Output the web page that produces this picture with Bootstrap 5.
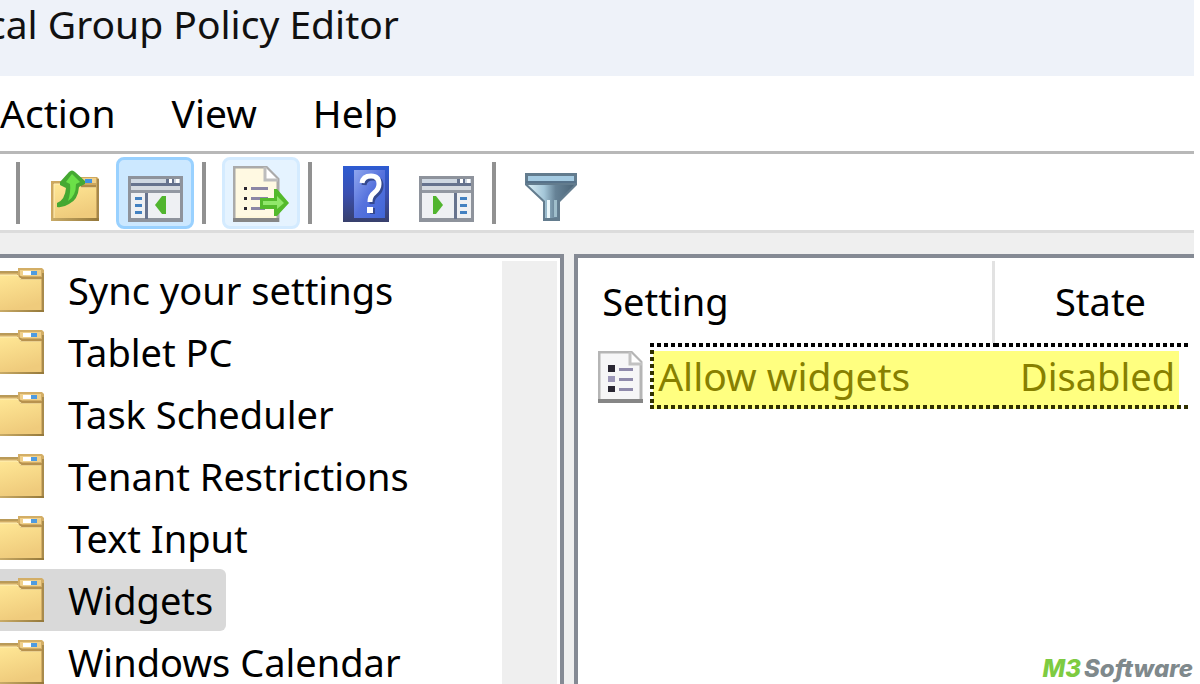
<!DOCTYPE html>
<html lang="en">
<head>
<meta charset="utf-8">
<meta name="viewport" content="width=device-width, initial-scale=1">
<title>Local Group Policy Editor</title>
<link href="https://cdn.jsdelivr.net/npm/bootstrap@5.3.0/dist/css/bootstrap.min.css" rel="stylesheet">
<style>
body{font-family:"Noto Sans","Open Sans",sans-serif;font-size:38px;line-height:60px;color:#000;background:#fff;overflow:hidden;padding-right:6px}
.title-bar{flex:none;background:#eef2f9;height:76px;font-size:39px;line-height:48px;color:#111}
.title-bar h1{font:inherit;margin:0 0 0 -13px;white-space:nowrap}
.menu-bar{flex:none;height:78px;padding:7px 0;border-bottom:3px solid #b8b8b8;gap:56px;font-size:39px}
.menu-bar a,.tree a{color:#000;text-decoration:none;white-space:nowrap}
.tools{flex:none;height:79px;border-bottom:3px solid #dcdcdc;padding:2px 0 0 16px}
.tool{border:3px solid transparent;border-radius:8px;background:none;padding:0;width:78px;height:72px;flex:none;display:flex;justify-content:center;align-items:flex-end;padding-bottom:4px}
.tool.slim{width:75px}
.tool.pressed{background:#cce8ff;border-color:#99d1ff}
.tool.hovered{background:#e5f3ff;border-color:#d4ebff}
.tool-group{gap:2px}
.tool-group.wide{gap:6px}
.rule-v{width:4px;height:62px;background:#919191;flex:none;margin:0 16px 0 8px}
.rule-v:first-child{margin-left:0}
.workspace{background:#efefef;padding-top:21px;gap:10px;min-height:0}
.pane{background:#fff;border:4px solid #858a94;border-bottom:0;min-width:0;overflow:hidden}
.tree-pane{width:calc(47% + 3px);border-left:0;flex:none}
.list-pane{border-right:0}
.tree{padding-top:1px}
.tree a{display:flex;align-items:center;height:62px;padding-right:13px;width:max-content;border-radius:0 6px 6px 0;gap:24px}
.tree a.active{background:#d9d9d9}
.scroll-track{width:55px;background:#efefef;margin:3px 3px 0 0}
.policy{table-layout:fixed;color:#000}
.policy > :not(caption) > * > *{padding:0;background-color:transparent;font-weight:400;box-shadow:none;vertical-align:middle;white-space:nowrap;line-height:60px}
.policy thead tr{height:85px}
.policy tbody tr{height:66px}
.policy > thead > tr > th.h-setting{padding:0 0 0 24px;background:linear-gradient(#e2e2e2,#e2e2e2) right 3px/3px 100% no-repeat}
.policy > thead > tr > th{background-position:right 3px}
.policy > thead > tr > th.h-state{padding:0 0 0 60px}
.policy > tbody > tr > td.glyph{padding:2px 0 0 20px}
.policy > tbody > tr > td.lit{color:#878000;padding:0 0 0 8px;font-size:39px;
 background:
 repeating-linear-gradient(90deg,#000 0 4px,transparent 4px 7px) 0 0/100% 4px no-repeat,
 repeating-linear-gradient(90deg,#303000 0 4px,transparent 4px 7px) 0 100%/100% 4px no-repeat,
 repeating-linear-gradient(#303000 0 4px,transparent 4px 7px) 0 0/4px 100% no-repeat,
 linear-gradient(#ffff80,#ffff80) 3px 8px/100% 100% no-repeat}
.policy > tbody > tr > td.lit-end{color:#878000;padding:0 0 0 25px;
 background:
 repeating-linear-gradient(90deg,#000 0 4px,transparent 4px 7px) 0 0/calc(100% - 3px) 4px no-repeat,
 repeating-linear-gradient(90deg,#303000 0 4px,transparent 4px 7px) 0 100%/calc(100% - 3px) 4px no-repeat,
 linear-gradient(#ffff80,#ffff80) 0 8px/calc(100% - 15px) 100% no-repeat}
.col-glyph{width:72px}
.col-name{width:56%}
.brand-mark{right:7px;bottom:0;gap:3px;font-family:Inter,sans-serif;font-weight:800;font-style:italic;font-size:24px;line-height:30px;color:#7f898c;white-space:nowrap}
.brand-mark b{font-weight:800;color:#7ecb41}
</style>
</head>
<body class="vh-100 d-flex flex-column position-relative">
<svg width="0" height="0" class="position-absolute" aria-hidden="true">
<defs>
<linearGradient id="gold" x1="0" y1="0" x2="0.3" y2="1"><stop offset="0" stop-color="#ffe795"/><stop offset="1" stop-color="#efcb7c"/></linearGradient>
<linearGradient id="edge" x1="0" y1="0" x2="1" y2="0"><stop offset="0" stop-color="#c9ab67"/><stop offset="1" stop-color="#94783a"/></linearGradient>
<linearGradient id="blue" x1="0" y1="0" x2="0" y2="1"><stop offset="0" stop-color="#2d5bd2"/><stop offset=".5" stop-color="#3a4fb0"/><stop offset="1" stop-color="#38406c"/></linearGradient>
<linearGradient id="page" x1="0" y1="0" x2="1" y2="1"><stop offset="0" stop-color="#8fa6ee"/><stop offset=".5" stop-color="#5672dd"/><stop offset="1" stop-color="#3f66d8"/></linearGradient>
<linearGradient id="steel" x1="0" y1="0" x2="1" y2="0"><stop offset="0" stop-color="#d9eef6"/><stop offset=".35" stop-color="#a4c6d8"/><stop offset=".6" stop-color="#668296"/><stop offset="1" stop-color="#4c6578"/></linearGradient>
<symbol id="folder" viewBox="0 0 44 46">
<path d="M0 5H18V1H42L44 3V45H0Z" fill="#d3ae66"/>
<path d="M0 4H18V6H0Z" fill="#b99a58"/>
<path d="M20 3H41V9H20Z" fill="#f0d08b"/>
<path d="M23 4H31V8H23Z" fill="#fff"/><path d="M31 4H37V8H31Z" fill="#4f9be0"/>
<path d="M0 8H18L21 13H41V43H0Z" fill="url(#gold)"/>
<path d="M0 8H17L21 12H41" fill="none" stroke="#fff0b8" stroke-width="1"/>
<path d="M19 9L22 11H42" fill="none" stroke="#b8924e" stroke-width="2"/>
<path d="M42 6H44V45H42Z" fill="#a98b4c"/><path d="M0 43H44V45H0Z" fill="url(#edge)"/>
</symbol>
<symbol id="winframe" viewBox="0 0 55 46">
<path d="M0 0H55V46H0Z" fill="#8e939c"/><path d="M3 3H52V42H3Z" fill="#eef0f3"/>
<path d="M3 3H52V7H3Z" fill="#cfd8e2"/><path d="M3 7H52V10H3Z" fill="#66738e"/>
<path d="M38 3H41V7H38ZM44 3H46V7H44Z" fill="#66738e"/><path d="M41 3H44V7H41ZM48 3H51V7H48Z" fill="#fff"/>
<path d="M3 10H52V15H3Z" fill="#d5dae0"/><path d="M3 14H52V17H3Z" fill="#9298a2"/>
</symbol>
</defs>
</svg>

<header class="title-bar overflow-hidden"><h1>cal Group Policy Editor</h1></header>

<nav class="menu-bar d-flex" aria-label="Menu"><a href="#">Action</a><a href="#">View</a><a href="#">Help</a></nav>

<div class="tools d-flex align-items-center" role="toolbar" aria-label="Tools">
<span class="rule-v"></span>
<div class="tool-group d-flex">
<button type="button" class="tool" aria-label="Up one level"><svg width="48" height="52" viewBox="0 0 48 52">
<path d="M0 11H28V7H46L48 9V51H0Z" fill="#cda85f"/><path d="M30 8H45V13H30Z" fill="#efd08b"/><path d="M34 9H41V13H34Z" fill="#3f93e4"/>
<path d="M3 14H28L31 18H45V48H3Z" fill="url(#gold)"/><path d="M3 48V14H27L31 17H45" fill="none" stroke="#fff0ba"/><path d="M30 16H45" stroke="#b08c49" stroke-width="2"/>
<path d="M46 9H48V51H46Z" fill="#a5874a"/><path d="M0 48H48V51H0Z" fill="url(#edge)"/>
<path d="M18 2Q21 -1 24 2L34 11V14L28 17Q27 30 18 34Q12 38 6 37V33Q14 30 15 18L9 15V12Z" fill="#45a832"/><path d="M21 4L29 12L25 14Q25 26 17 31Q20 22 19 14L15 12Z" fill="#6be048"/></svg></button>
<button type="button" class="tool pressed" aria-label="Show or hide tree" aria-pressed="true"><svg width="55" height="46" viewBox="0 0 55 46">
<use href="#winframe"/><path d="M17 17H20V43H17Z" fill="#66738e"/><path d="M7 21H14V24H7ZM7 28H14V31H7ZM7 35H14V38H7Z" fill="#4381c1"/><path d="M38 20V38H34L27 29L34 20Z" fill="#51b52f"/></svg></button>
</div>
<span class="rule-v"></span>
<button type="button" class="tool hovered" aria-label="Export list"><svg width="56" height="56" viewBox="0 0 56 56">
<path d="M1 1H33L45 13V55H1Z" fill="#fff7da" stroke="#aaa" stroke-width="3"/><path d="M3 3H31V15H43V50H3Z" fill="#fff9e2"/><path d="M32 1V14H45" fill="#fff" stroke="#bdbdbd" stroke-width="3"/><path d="M0 52H46V56H0Z" fill="#868686"/>
<path d="M11 21H14V24H11ZM11 31H14V34H11ZM11 41H14V44H11Z" fill="#2a2530"/><path d="M18 21H35V24H18ZM18 31H35V34H18ZM18 41H32V44H18Z" fill="#8b86a5"/>
<path d="M27 32H41V23H44L56 37L44 50H41V43H27Z" fill="#54ba2c"/><path d="M30 35H44V30L51 37L44 43V39H30Z" fill="#91e76b"/></svg></button>
<span class="rule-v"></span>
<div class="tool-group wide d-flex">
<button type="button" class="tool slim" aria-label="Help"><svg width="46" height="56" viewBox="0 0 46 56">
<path d="M0 0H46V56H0Z" fill="url(#blue)"/><path d="M11 4H42V52H11Z" fill="url(#page)"/>
<path d="M19 17Q20 10 28 10T36 18Q36 23 31 27Q27 30 27 36" fill="none" stroke="#34488f" stroke-width="5" transform="translate(2 2)"/>
<path d="M19 17Q20 10 28 10T36 18Q36 23 31 27Q27 30 27 36" fill="none" stroke="#fff" stroke-width="5"/><path d="M27 42H32V48H27Z" fill="#34488f"/><path d="M24 41H30V47H24Z" fill="#fff"/></svg></button>
<button type="button" class="tool slim" aria-label="Show or hide action pane"><svg width="55" height="46" viewBox="0 0 55 46">
<use href="#winframe"/><path d="M35 17H38V43H35Z" fill="#66738e"/><path d="M41 21H48V24H41ZM41 28H48V31H41ZM41 35H48V38H41Z" fill="#4381c1"/><path d="M14 20V38H17L24 29L17 20Z" fill="#51b52f"/></svg></button>
</div>
<span class="rule-v"></span>
<button type="button" class="tool" aria-label="Filter"><svg width="52" height="50" viewBox="0 0 52 50">
<path d="M0 1H52V13L35 30V49H18V30L0 13Z" fill="#637c8e"/><path d="M3 13H49L33 29V46H20V29Z" fill="url(#steel)"/><path d="M3 4H49V9H3Z" fill="#a5cbe2"/><path d="M1 10H51" stroke="#56728a" stroke-width="2"/><path d="M22 28H25V46H22Z" fill="#eaf7fb"/><path d="M29 28H32V45H29Z" fill="#9fbecb"/></svg></button>
</div>

<main class="workspace d-flex flex-fill">
<section class="pane tree-pane d-flex">
<nav class="tree flex-fill" aria-label="Policy tree">
<a href="#"><svg width="44" height="46"><use href="#folder"/></svg>Sync your settings</a>
<a href="#"><svg width="44" height="46"><use href="#folder"/></svg>Tablet PC</a>
<a href="#"><svg width="44" height="46"><use href="#folder"/></svg>Task Scheduler</a>
<a href="#"><svg width="44" height="46"><use href="#folder"/></svg>Tenant Restrictions</a>
<a href="#"><svg width="44" height="46"><use href="#folder"/></svg>Text Input</a>
<a href="#" class="active" aria-current="true"><svg width="44" height="46"><use href="#folder"/></svg>Widgets</a>
<a href="#"><svg width="44" height="46"><use href="#folder"/></svg>Windows Calendar</a>
</nav>
<div class="scroll-track"></div>
</section>
<section class="pane list-pane flex-fill">
<table class="table table-borderless policy mb-0">
<colgroup><col class="col-glyph"><col class="col-name"><col></colgroup>
<thead><tr><th class="h-setting" colspan="2" scope="col">Setting</th><th class="h-state" scope="col">State</th></tr></thead>
<tbody><tr>
<td class="glyph"><svg class="d-block" width="45" height="52" viewBox="0 0 45 52"><path d="M1 1H33L43 11V51H1Z" fill="#f6f6f7" stroke="#b5b5b5" stroke-width="3"/><path d="M32 1V13H44" fill="#fff" stroke="#c2c2c2" stroke-width="3"/><path d="M0 48H45V52H0Z" fill="#868686"/><path d="M10 14H17V21H10ZM10 35H17V41H10Z" fill="#2a2733"/><path d="M10 25H17V31H10Z" fill="#9c97b8"/><path d="M21 17H35V20H21ZM21 27H35V30H21ZM21 37H35V40H21Z" fill="#8f8aab"/></svg></td>
<td class="lit">Allow widgets</td><td class="lit-end">Disabled</td>
</tr></tbody>
</table>
</section>
</main>
<div class="brand-mark position-absolute d-flex"><b>M3</b><span>Software</span></div>
<script src="https://cdn.jsdelivr.net/npm/bootstrap@5.3.0/dist/js/bootstrap.bundle.min.js"></script>
</body>
</html>
